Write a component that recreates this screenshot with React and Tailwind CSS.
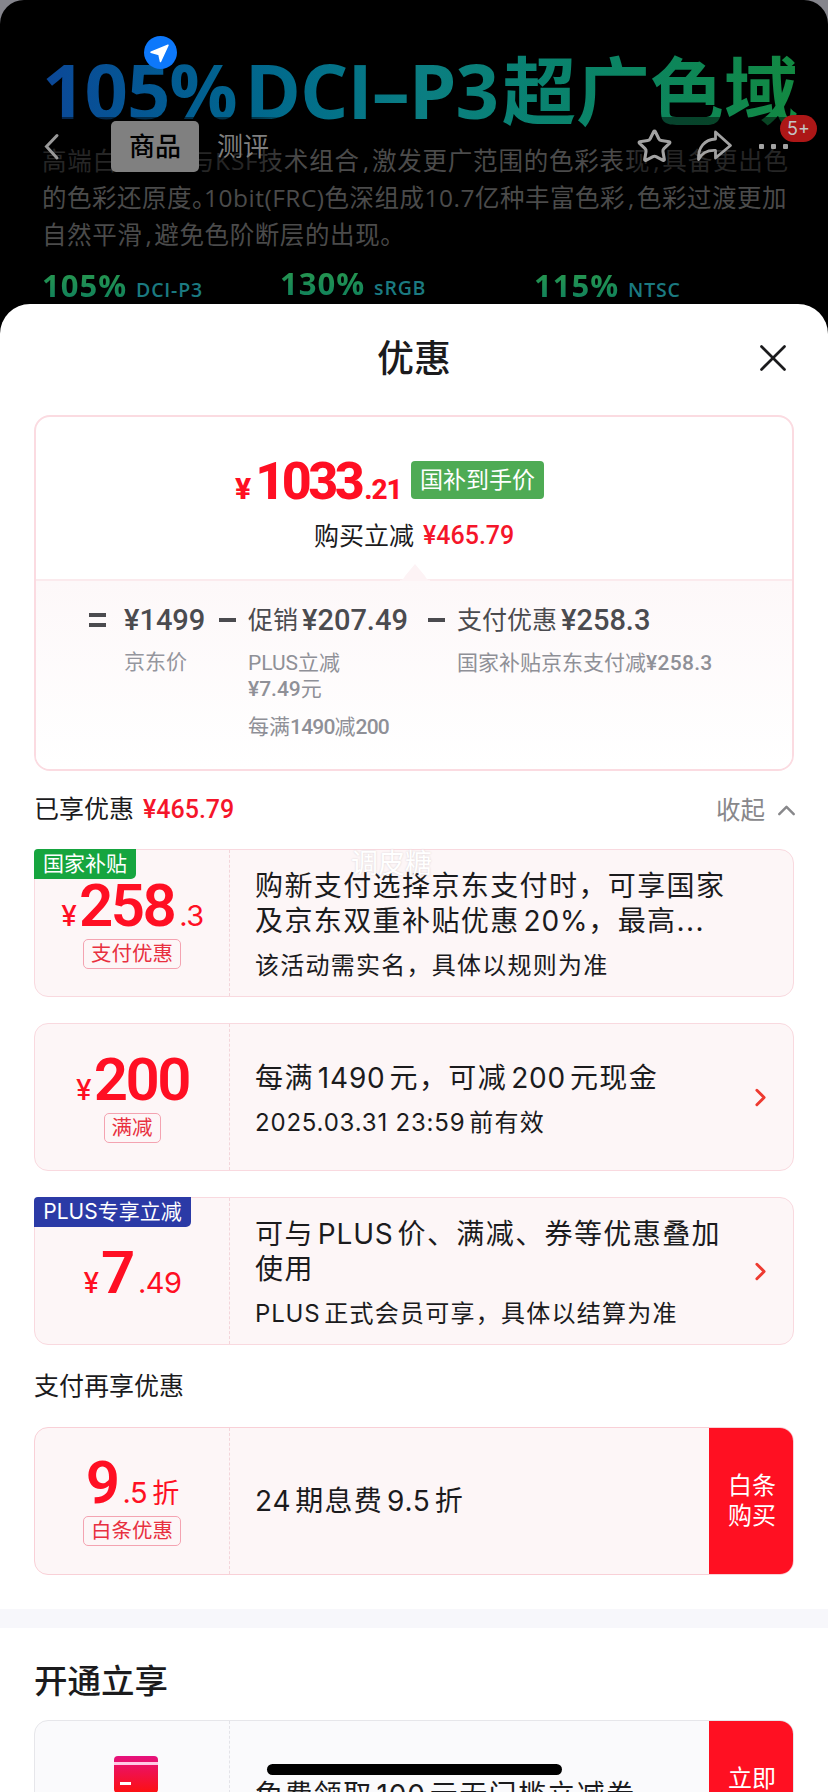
import { ChevronRight, ChevronUp, Star, X } from "lucide-react";

const stats = [
  { value: "105%", label: "DCI-P3", className: "w-[238px] pt-[2px]" },
  { value: "130%", label: "sRGB", className: "w-[254px]" },
  { value: "115%", label: "NTSC", className: "w-[200px] pt-[2px]" },
];

const coupons = [
  {
    badge: "国家补贴",
    badgeClass: "w-[102px] bg-[#16a53f]",
    amount: "258",
    rest: ".3",
    tag: "支付优惠",
    pad: "pt-[28px]",
    lines: ["购新支付选择京东支付时，可享国家", "及京东双重补贴优惠20%，最高..."],
    note: "该活动需实名，具体以规则为准",
  },
  {
    amount: "200",
    tag: "满减",
    pad: "pt-[28px]",
    lines: ["每满1490元，可减200元现金"],
    note: "2025.03.31 23:59前有效",
    arrow: true,
  },
  {
    badge: "PLUS专享立减",
    badgeClass: "w-[157px] bg-[#2b3aa6]",
    amount: "7",
    rest: ".49",
    pad: "pt-[47px]",
    lines: ["可与PLUS价、满减、券等优惠叠加", "使用"],
    note: "PLUS正式会员可享，具体以结算为准",
    arrow: true,
  },
];

// adds a small gap between Chinese characters and latin runs
function Spaced({ text }) {
  const parts = text.split(/([A-Za-z0-9][A-Za-z0-9.:% ]*)/).filter(Boolean);
  return parts.map((part, i) =>
    /^[A-Za-z0-9]/.test(part) ? (
      <span
        key={i}
        className={`tracking-[0.8px] ${i === 0 ? "mr-[4px]" : part.endsWith("%") ? "ml-1" : "mr-[4px] ml-1"}`}
      >
        {part}
      </span>
    ) : (
      part
    )
  );
}

function Amount({ amount, rest, unit, yen = true }) {
  return (
    <div className="flex h-[56px] items-baseline justify-center pl-px text-[#ff0f23]">
      {yen && <span className="mr-[2px] text-[28px] leading-[56px] font-medium">¥</span>}
      <span className="font-['Roboto'] text-[60px] leading-[56px] font-semibold tracking-[-2.5px]">{amount}</span>
      {rest && <span className="ml-[5px] text-[29px] leading-[56px] tracking-[-0.5px]">{rest}</span>}
      {unit && <span className="ml-[5px] text-[27px] leading-[56px]">{unit}</span>}
    </div>
  );
}

function Tag({ children }) {
  return (
    <span className="mt-[5px] flex h-[30px] items-center rounded-[5px] border border-[#f4a3b1] px-[7px] text-[20.5px] leading-[28px] text-[#e8303f]">
      {children}
    </span>
  );
}

function Coupon({ item }) {
  return (
    <div className="relative flex h-[148px] rounded-[14px] border-[1.5px] border-[#f9d9df] bg-[#fdf6f7]">
      {item.badge && (
        <span
          className={`absolute -top-px -left-px flex h-[30px] items-center justify-center rounded-tl-[4px] rounded-br-[5px] text-[21px] whitespace-nowrap text-white ${item.badgeClass}`}
        >
          {item.badge}
        </span>
      )}
      <div className={`flex w-[195px] flex-col items-center border-r border-dashed border-[#f3d5da] ${item.pad}`}>
        <Amount amount={item.amount} rest={item.rest} />
        {item.tag && <Tag>{item.tag}</Tag>}
      </div>
      <div className="flex flex-1 flex-col justify-center pt-[6px] pl-[25px] whitespace-nowrap">
        {item.lines.map((line) => (
          <p key={line} className="text-[28px] leading-[35px] tracking-[1.4px]">
            <Spaced text={line} />
          </p>
        ))}
        <p className="mt-[9px] text-[24px] leading-[35px] tracking-[1.25px]">
          <Spaced text={item.note} />
        </p>
      </div>
      {item.arrow && (
        <div className="flex w-[46px] items-center">
          <ChevronRight size={29} strokeWidth={2.4} className="-ml-px text-[#ee3a30]" />
        </div>
      )}
    </div>
  );
}

function Banner() {
  return (
    <header className="relative h-[350px] overflow-hidden rounded-t-[24px] bg-black pl-[42px] whitespace-nowrap">
      <h1 className="w-[762px] bg-linear-to-r from-[#0c4798] via-[#0b7e82] to-[#13893f] bg-clip-text pt-[42px] font-['Open_Sans','Noto_Sans_CJK_SC',sans-serif] text-[76px] leading-[96px] font-bold tracking-[-1px] text-transparent">
        105%<span className="ml-[8px]">DCI</span>–P3
        <span className="ml-[4px] text-[74px] tracking-normal">超广色域</span>
      </h1>
      <div className="mt-[3px] font-['Open_Sans','Noto_Sans_CJK_SC',sans-serif] text-[24.5px] leading-[37px] text-[#4b4b4b]">
        <p className="tracking-[0.8px]">
          高端白光LED与KSF技术组合<Comma />激发更广范围的色彩表现<Comma />具备更出色
        </p>
        <p className="tracking-[0.5px]">
          的色彩还原度<span className="-mr-[13px]">。</span>10bit(FRC)色深组成10.7亿种丰富色彩<Comma />色彩过渡更加
        </p>
        <p className="tracking-[0.6px]">
          自然平滑<Comma />避免色阶断层的出现。
        </p>
      </div>
      <div className="mt-[12px] flex">
        {stats.map((s) => (
          <div key={s.label} className={`flex items-baseline font-['Open_Sans'] font-bold ${s.className}`}>
            <span className="bg-linear-to-b from-[#2a9a4c] to-[#0c7f5c] bg-clip-text text-[31px] leading-[36px] font-bold tracking-[1px] text-transparent">
              {s.value}
            </span>
            <span className="ml-[9px] text-[19.5px] font-semibold tracking-[0.8px] text-[#1b7a80]">{s.label}</span>
          </div>
        ))}
      </div>
      <div className="absolute top-[117px] left-0 h-[59px] w-[300px] bg-linear-to-r from-black/50 from-85% to-transparent" />
      <div className="absolute top-[117px] right-0 h-[59px] w-[210px] bg-linear-to-l from-black/50 from-90% to-transparent" />
      <nav className="absolute inset-x-0 top-[121px] flex h-[51px] items-center pl-[43px] text-[26px]">
        <svg className="h-[28px] w-[18px]" viewBox="0 0 18 28" fill="none" stroke="#999" strokeWidth="3" strokeLinecap="round">
          <path d="M14 2.5 3.5 13.5 14 25" />
        </svg>
        <span className="ml-[50px] flex h-[51px] w-[88px] items-center justify-center rounded-[5px] bg-[#808080] font-medium text-black">
          商品
        </span>
        <span className="ml-[18px] text-[#7f7f7f]">测评</span>
        <Star size={37} strokeWidth={2} className="ml-[367px] text-[#a2a2a2]" />
        <svg className="ml-[22px] h-[36px] w-[38px]" viewBox="0 0 38 36" fill="none" stroke="#a2a2a2" strokeWidth="2.8" strokeLinejoin="round">
          <path d="M20.500 3 35.500 16.500 20.500 29V21.500C11.500 21 6.500 24.500 3.500 30.500 3 18.500 9.500 10.500 20.500 10Z" />
        </svg>
        <span className="ml-[26px] flex gap-[7px]">
          <i className="size-[5px] rounded-[1px] bg-[#a2a2a2]" />
          <i className="size-[5px] rounded-[1px] bg-[#a2a2a2]" />
          <i className="size-[5px] rounded-[1px] bg-[#a2a2a2]" />
        </span>
      </nav>
      <span className="absolute top-[115px] left-[780px] flex h-[27px] w-[37px] items-center justify-center rounded-full bg-[#ad1717] font-['Inter'] text-[18px] text-[#c4c4c4]">
        5+
      </span>
      <svg className="absolute top-[36px] left-[144px] size-[33px]" viewBox="0 0 33 33">
        <circle cx="16.500" cy="16.500" r="16.500" fill="#0d78fb" />
        <path
          d="M24 9.300 7 16.200 15 18.500 16.500 25.500Z"
          fill="#fff"
          stroke="#fff"
          strokeWidth="1.5"
          strokeLinejoin="round"
        />
      </svg>
    </header>
  );
}

function Comma() {
  return <span className="mr-[2px] ml-[3px]">,</span>;
}

function PriceCard() {
  return (
    <section className="flex h-[356px] flex-col overflow-hidden rounded-[16px] border-2 border-[#fbdbe1] bg-white">
      <div className="relative h-[164px] border-b-2 border-[#fbeaed] pt-[35px]">
        <div className="flex items-end pl-[199px]">
          <div className="flex w-[166px] items-baseline font-['Roboto'] font-extrabold text-[#ff0f23]">
            <span className="text-[30px]">¥</span>
            <span className="ml-[4px] text-[52px] leading-[60px] tracking-[-3.5px]">1033</span>
            <span className="ml-[3px] text-[28px] tracking-[-1px]">.21</span>
          </div>
          <span className="mb-[13px] ml-[10px] flex h-[38px] w-[133px] items-center justify-center rounded-[4px] bg-[#4eab54] text-[23px] text-white">
            国补到手价
          </span>
        </div>
        <p className="mt-[6px] flex pl-[278px] text-[25px] leading-[36px]">
          购买立减
          <span className="ml-[9px] font-['Roboto'] text-[25px] font-medium text-[#f5152a]">¥465.79</span>
        </p>
        <svg className="absolute -bottom-[2px] left-[364px] h-[18px] w-[30px]" viewBox="0 0 30 18">
          <path d="M0 17C3 17 4 15 5 13L15 1 25 13C26 15 27 17 30 17V18H0Z" fill="#fdf3f5" />
        </svg>
      </div>
      <div className="flex flex-1 bg-linear-to-b from-[#fdf8f9] to-white pt-[20px] pl-[53px] whitespace-nowrap text-[#4b4b4f]">
        <div className="flex w-[130px] gap-[18px]">
          <Operator sign="=" />
          <div>
            <p className="font-['Roboto'] text-[29px] leading-[38px] font-medium">¥1499</p>
            <p className="mt-[8px] text-[21px] leading-[30px] text-[#95969e]">京东价</p>
          </div>
        </div>
        <div className="flex w-[209px] gap-[12px]">
          <Operator sign="-" />
          <div>
            <Term label="促销" value="¥207.49" />
            <p className="mt-[11px] text-[21px] leading-[26px] text-[#8f9097]">
              <span className="font-['Roboto']">PLUS</span>立减
              <br />
              <span className="font-['Roboto'] font-medium">¥7.49</span>元
            </p>
            <p className="mt-[12px] text-[21px] leading-[26px] text-[#8f9097]">
              每满<span className="font-['Roboto'] font-medium tracking-[-0.8px]">1490</span>减
              <span className="font-['Roboto'] font-medium tracking-[-0.8px]">200</span>
            </p>
          </div>
        </div>
        <div className="flex gap-[12px]">
          <Operator sign="-" />
          <div>
            <Term label="支付优惠" value="¥258.3" />
            <p className="mt-[11px] text-[21px] leading-[26px] text-[#8f9097]">
              国家补贴京东支付减<span className="font-['Roboto'] font-medium tracking-[0.3px]">¥258.3</span>
            </p>
          </div>
        </div>
      </div>
    </section>
  );
}

function Operator({ sign }) {
  return (
    <span className="flex h-[38px] w-[17px] flex-col justify-center gap-[6px]">
      <i className="h-[4px] bg-[#4b4b4f]" />
      {sign === "=" && <i className="h-[4px] bg-[#4b4b4f]" />}
    </span>
  );
}

function Term({ label, value }) {
  return (
    <p className="flex text-[25px] leading-[38px]">
      {label}
      <span className="ml-[4px] font-['Roboto'] text-[29px] font-medium">{value}</span>
    </p>
  );
}

export default function App() {
  return (
    <div className="relative h-[1792px] w-[828px] overflow-hidden bg-[#85858c] font-['Inter','Noto_Sans_CJK_SC',sans-serif] text-[#1b1b1d]">
      <Banner />
      <main className="relative -mt-[46px] h-[1488px] rounded-t-[30px] bg-white">
        <div className="relative flex h-[111px] items-center justify-center">
          <h2 className="mt-[-2px] text-[37px] font-medium">优惠</h2>
          <X size={46} strokeWidth={1.4} className="absolute top-[31px] left-[750px]" />
        </div>
        <div className="px-[34px]">
          <PriceCard />
          <div className="flex h-[78px] items-center text-[25px]">
            已享优惠
            <span className="ml-[9px] font-['Roboto'] text-[25px] font-medium text-[#f5152a]">¥465.79</span>
            <span className="ml-auto text-[24.5px] text-[#88888b]">收起</span>
            <ChevronUp size={29} strokeWidth={2} className="-mr-[7px] ml-[7px] text-[#88888b]" />
          </div>
          <div className="flex flex-col gap-[26px]">
            {coupons.map((item) => (
              <Coupon key={item.amount} item={item} />
            ))}
          </div>
          <h3 className="flex h-[82px] items-center pt-[2px] text-[25px]">支付再享优惠</h3>
          <div className="flex h-[148px] overflow-hidden rounded-[14px] border-[1.5px] border-[#f9d0d7] bg-[#fdf6f7]">
            <div className="flex w-[195px] flex-col items-center border-r border-dashed border-[#f3d5da] pt-[27px]">
              <Amount yen={false} amount="9" rest=".5" unit="折" />
              <Tag>白条优惠</Tag>
            </div>
            <p className="flex flex-1 items-center pl-[25px] text-[28px] tracking-[1.2px]">
              <Spaced text="24期息费9.5折" />
            </p>
            <button className="-my-[2px] -mr-[2px] w-[86px] bg-[#ff1022] text-[24px] leading-[30px] text-white">
              白条
              <br />
              购买
            </button>
          </div>
        </div>
        <div className="mt-[34px] h-[19px] bg-[#f7f7fb]" />
        <div className="px-[34px]">
          <h2 className="flex h-[92px] items-center pt-[15px] text-[33.5px] font-medium">开通立享</h2>
          <div className="flex h-[148px] overflow-hidden rounded-[14px] border-[1.5px] border-[#e6e6ea] bg-[#fafafc]">
            <div className="flex w-[195px] justify-center border-r border-dashed border-[#e3e3e8] pt-[35px] pl-[8px]">
              <svg className="h-[37px] w-[44px]" viewBox="0 0 44 37">
                <defs>
                  <linearGradient id="card" x1="0" y1="0" x2="0" y2="1">
                    <stop offset="0" stopColor="#e5127d" />
                    <stop offset="1" stopColor="#fd1010" />
                  </linearGradient>
                </defs>
                <rect width="44" height="37" rx="4" fill="url(#card)" />
                <rect y="6" width="44" height="3" fill="#ffc9e4" />
                <rect x="6" y="26" width="11" height="3" fill="#fff" />
              </svg>
            </div>
            <p className="flex-1 pt-[55px] pl-[25px] text-[28px] leading-[38px] tracking-[1.4px] whitespace-nowrap">
              <Spaced text="免费领取100元无门槛立减券" />
            </p>
            <button className="-my-[2px] -mr-[2px] w-[86px] bg-[#ff1022] text-[24px] leading-[30px] text-white">
              立即
              <br />
              开通
            </button>
          </div>
        </div>
      </main>
      <span className="absolute top-[844px] left-[351px] text-[27px] leading-[40px] text-white [text-shadow:0_0_2px_#d8cfd1]">
        调皮糖
      </span>
      <div className="absolute top-[1764px] left-[267px] h-[11px] w-[295px] rounded-full bg-black" />
    </div>
  );
}
